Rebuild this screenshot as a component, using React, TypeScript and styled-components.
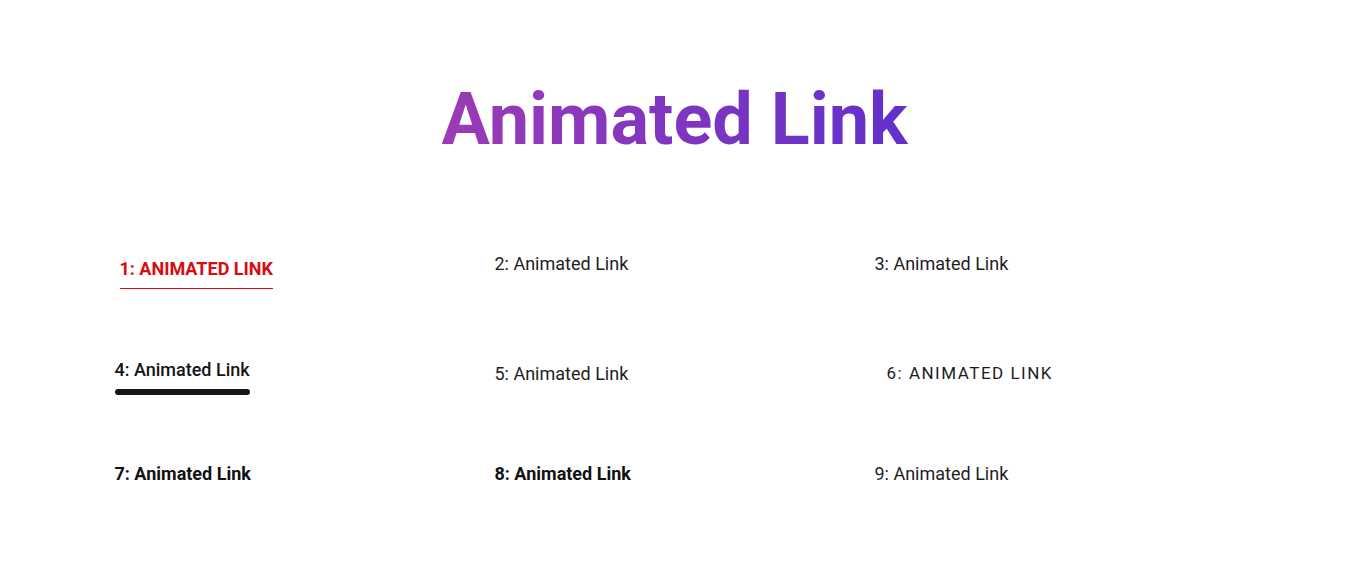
import React from 'react'
import styled, { createGlobalStyle } from 'styled-components'

const GlobalStyle = createGlobalStyle`
*, *::before, *::after {
  box-sizing: border-box;
}
body {
  margin: 0;
  background: #fff;
  font-family: Roboto, "Liberation Sans", sans-serif;
}
`

type Variant = 'red' | 'plain' | 'bar' | 'spaced' | 'bold'

const links: { label: string; variant: Variant }[] = [
  { label: '1: Animated Link', variant: 'red' },
  { label: '2: Animated Link', variant: 'plain' },
  { label: '3: Animated Link', variant: 'plain' },
  { label: '4: Animated Link', variant: 'bar' },
  { label: '5: Animated Link', variant: 'plain' },
  { label: '6: Animated Link', variant: 'spaced' },
  { label: '7: Animated Link', variant: 'bold' },
  { label: '8: Animated Link', variant: 'bold' },
  { label: '9: Animated Link', variant: 'plain' },
]

const App = () => {
  return (
    <Page>
      <GlobalStyle />
      <Title>Animated Link</Title>
      <Grid>
        {links.map((l) => (
          <Cell key={l.label}>
            <Link href="#" variant={l.variant}>{l.label}</Link>
          </Cell>
        ))}
      </Grid>
    </Page>
  )
}

export default App

const Page = styled.div`
width: 100%;
padding-top: 78px;
`

const Title = styled.h1`
margin: 0 auto;
width: fit-content;
font-size: 72px;
font-weight: 700;
line-height: 84px;
background: linear-gradient(to right, #9c3bb5, #6230cc);
-webkit-background-clip: text;
background-clip: text;
color: transparent;
`

const Grid = styled.div`
width: 1140px;
margin: 90px auto 0;
padding-left: 10px;
display: grid;
grid-template-columns: repeat(3, 380px);
grid-template-rows: 110px 100px 100px;
`

const Cell = styled.div`
display: flex;
align-items: flex-start;
`

const Link = styled.a<{ variant: Variant }>`
display: inline-block;
margin-top: 1px;
text-decoration: none;
font-size: 18px;
line-height: 21px;
color: #1e1e1e;
font-weight: 400;

${({ variant }) => variant === 'red' && `
  color: #d90b0f;
  font-weight: 700;
  text-transform: uppercase;
  margin: 6px 0 0 5px;
  padding-bottom: 9px;
  border-bottom: 1px solid #e0080c;
`}

${({ variant }) => variant === 'bar' && `
  font-weight: 500;
  margin-top: -3px;
  color: #151515;
  &::after {
    content: "";
    display: block;
    height: 6px;
    margin-top: 9px;
    border-radius: 3px;
    background: #151515;
  }
`}

${({ variant }) => variant === 'spaced' && `
  font-size: 17px;
  text-transform: uppercase;
  letter-spacing: 1.5px;
  margin-left: 12px;
`}

${({ variant }) => variant === 'bold' && `
  font-weight: 700;
  color: #111;
`}
`
